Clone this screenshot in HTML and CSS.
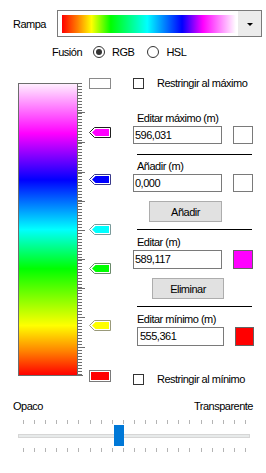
FILE: index.html
```html
<!DOCTYPE html>
<html lang="es">
<head>
    <meta charset="UTF-8">
    <title>Rampa de color</title>
    <link rel="stylesheet" href="styles.css">
</head>
<body>
    <div class="dialog">
        <div class="ramp-row">
            <span class="ramp-label">Rampa</span>
            <div class="combo">
                <div class="combo-value"><div class="ramp-h"></div></div>
                <div class="combo-btn"><span class="caret"></span></div>
            </div>
        </div>

        <div class="blend-row">
            <span class="blend-label">Fusión</span>
            <label class="radio"><span class="radio-dot checked"></span>RGB</label>
            <label class="radio"><span class="radio-dot"></span>HSL</label>
        </div>

        <div class="editor">
            <div class="scale">
                <div class="ramp-v"></div>
                <div class="ticks">
                    <svg width="7" height="293" viewBox="0 0 7 293">
                        <g stroke="#6d6d6d" stroke-width="1">
                            <path d="M0 29.5H7M0 59.5H7M0 89.5H7M0 118.5H7M0 147.5H7M0 176.5H7M0 205.5H7M0 234.5H7M0 264.5H7M0 292.5H5"/>
                        </g>
                    </svg>
                </div>
            </div>

            <!-- stops: top offset = position of the value on the scale -->
            <div class="markers">
                <svg class="marker" style="top: 1px" width="22" height="11" viewBox="0 0 22 11">
                    <rect x="0.5" y="0.5" width="21" height="10" fill="#fff" stroke="#8a8a8a"/>
                </svg>
                <svg class="marker" style="top: 50px" width="22" height="11" viewBox="0 0 22 11">
                    <polygon points="0.5,5.5 5.5,0.5 21.5,0.5 21.5,10.5 5.5,10.5" fill="#fff" stroke="#1e1e1e"/>
                    <polygon points="3,5.5 6.5,2 20,2 20,9 6.5,9" fill="#ff00ff"/>
                </svg>
                <svg class="marker" style="top: 97px" width="22" height="11" viewBox="0 0 22 11">
                    <polygon points="0.5,5.5 5.5,0.5 21.5,0.5 21.5,10.5 5.5,10.5" fill="#fff" stroke="#3a3a8a"/>
                    <polygon points="3,5.5 6.5,2 20,2 20,9 6.5,9" fill="#0000ff"/>
                </svg>
                <svg class="marker" style="top: 147px" width="22" height="11" viewBox="0 0 22 11">
                    <polygon points="0.5,5.5 5.5,0.5 21.5,0.5 21.5,10.5 5.5,10.5" fill="#fff" stroke="#7a9a9a"/>
                    <polygon points="3,5.5 6.5,2 20,2 20,9 6.5,9" fill="#00ffff"/>
                </svg>
                <svg class="marker" style="top: 186px" width="22" height="11" viewBox="0 0 22 11">
                    <polygon points="0.5,5.5 5.5,0.5 21.5,0.5 21.5,10.5 5.5,10.5" fill="#fff" stroke="#6a8a6a"/>
                    <polygon points="3,5.5 6.5,2 20,2 20,9 6.5,9" fill="#00ff00"/>
                </svg>
                <svg class="marker" style="top: 243px" width="22" height="11" viewBox="0 0 22 11">
                    <polygon points="0.5,5.5 5.5,0.5 21.5,0.5 21.5,10.5 5.5,10.5" fill="#fff" stroke="#9a9a7a"/>
                    <polygon points="3,5.5 6.5,2 20,2 20,9 6.5,9" fill="#ffff00"/>
                </svg>
                <svg class="marker" style="top: 293px" width="22" height="12" viewBox="0 0 22 12">
                    <rect x="0.5" y="0.5" width="21" height="11" fill="#fff" stroke="#7a7a7a"/>
                    <rect x="2" y="2" width="18" height="8" fill="#ff0000"/>
                </svg>
            </div>

            <div class="panel">
                <label class="check-row"><span class="checkbox"></span>Restringir al máximo</label>

                <div class="field-label label-max">Editar máximo (m)</div>
                <div class="field-row">
                    <div class="input">596,031</div>
                    <div class="swatch"></div>
                </div>
                <div class="separator"></div>

                <div class="field-label label-add">Añadir (m)</div>
                <div class="field-row">
                    <div class="input">0,000</div>
                    <div class="swatch"></div>
                </div>
                <button class="btn btn-add">Añadir</button>
                <div class="separator sep-add"></div>

                <div class="field-label label-edit">Editar (m)</div>
                <div class="field-row">
                    <div class="input input-tall">589,117</div>
                    <div class="swatch swatch-tall swatch-magenta"></div>
                </div>
                <button class="btn btn-delete">Eliminar</button>
                <div class="separator sep-add"></div>

                <div class="field-label label-edit">Editar mínimo (m)</div>
                <div class="field-row">
                    <div class="input input-tall input-min">555,361</div>
                    <div class="swatch swatch-tall swatch-red"></div>
                </div>

                <label class="check-row check-min"><span class="checkbox"></span>Restringir al mínimo</label>
            </div>
        </div>

        <div class="opacity">
            <div class="opacity-labels"><span>Opaco</span><span>Transparente</span></div>
            <div class="slider">
                <div class="slider-ticks">
                    <span></span><span></span><span></span><span></span><span></span><span></span><span></span>
                    <span></span><span></span><span></span><span></span><span></span><span></span><span></span>
                    <span></span><span></span><span></span><span></span><span></span><span></span><span></span>
                </div>
                <div class="slider-track"><div class="slider-thumb"></div></div>
                <div class="slider-ticks ticks-bottom">
                    <span></span><span></span><span></span><span></span><span></span><span></span><span></span>
                    <span></span><span></span><span></span><span></span><span></span><span></span><span></span>
                    <span></span><span></span><span></span><span></span><span></span><span></span><span></span>
                </div>
            </div>
        </div>
    </div>
</body>
</html>
```

FILE: styles.css
```css
:root {
    --border-color: #7a7a7a;
    --scale-color: #6d6d6d;
    --button-color: #e1e1e1;
    --button-border: #adadad;
    --accent-color: #0078d7;
    --text-color: #000000;
}
* { margin: 0; padding: 0; box-sizing: border-box; }
body { font-family: 'Liberation Sans', Arial, sans-serif; font-size: 11px; letter-spacing: -0.5px; color: var(--text-color); background: #ffffff; }
.dialog { width: 266px; height: 473px; overflow: hidden; }

/* ramp selector */
.ramp-row { display: flex; align-items: center; padding: 10px 0 0 13px; }
.ramp-label { width: 44px; }
.combo { display: flex; width: 205px; height: 27px; border: 1px solid var(--border-color); background: #ffffff; }
.combo-value { padding: 4px 2px 4px 4px; }
.ramp-h { width: 174px; height: 18px; background: linear-gradient(to right, #ff0000 0%, #ff8000 9%, #ffff00 17%, #00ff00 28%, #00ffff 49%, #0000ff 69%, #ff00ff 81%, #ffffff 100%); }
.combo-btn { flex: 1; display: flex; align-items: center; justify-content: center; background: #ececec; }
.caret { width: 0; height: 0; border-left: 3px solid transparent; border-right: 3px solid transparent; border-top: 3px solid #000000; margin-top: 1px; }

/* blend mode */
.blend-row { display: flex; align-items: center; height: 14px; margin-top: 8px; padding-left: 52px; }
.blend-label { margin-right: 11px; }
.radio { display: flex; align-items: center; gap: 7px; }
.radio + .radio { margin-left: 13px; }
.radio-dot { width: 12px; height: 12px; border: 1px solid #333333; border-radius: 50%; display: flex; align-items: center; justify-content: center; }
.radio-dot.checked::after { content: ''; width: 6px; height: 6px; border-radius: 50%; background: #333333; }

/* scale + stops + fields */
.editor { display: flex; margin-top: 18px; padding-left: 18px; }
.scale { display: flex; height: 293px; margin-top: 6px; }
.ramp-v { width: 60px; height: 293px; border: 1px solid var(--scale-color); background: linear-gradient(to bottom, #ffeeff 0%, #ff00ff 17%, #0000ff 33%, #00ffff 50%, #00ff00 63.5%, #ffff00 83%, #ff8000 92%, #ff0000 100%); }
.ticks { position: relative; width: 7px; height: 293px; background: repeating-linear-gradient(to bottom, var(--scale-color) 0 1px, transparent 1px 3px); background-size: 4px 100%; background-repeat: no-repeat; }
.ticks svg { display: block; }
.markers { position: relative; width: 22px; height: 306px; margin-left: 4px; }
.marker { position: absolute; left: 0; display: block; }

.panel { width: 121px; margin-left: 22px; }
.check-row { display: flex; align-items: center; gap: 13px; height: 12px; }
.checkbox { width: 11px; height: 11px; border: 1px solid #333333; background: #ffffff; }
.check-min { margin-top: 27px; }
.field-label { margin-left: 4px; line-height: 13px; }
.label-max { margin-top: 23px; }
.label-add { margin-top: 5px; }
.label-edit { margin-top: 6px; }
.field-row { display: flex; gap: 11px; margin-top: 1px; }
.input { width: 89px; height: 18px; border: 1px solid var(--border-color); padding-left: 1px; line-height: 16px; background: #ffffff; }
.input-tall { height: 19px; line-height: 17px; }
.input-min { width: 90px; margin-left: 4px; padding-left: 2px; }
.swatch { width: 20px; height: 18px; border: 1px solid var(--border-color); background: #ffffff; }
.swatch-tall { height: 19px; }
.swatch-magenta { background: #ff00ff; border-color: #646464; }
.swatch-red { background: #ff0000; border-color: #646464; }
.separator { width: 115px; margin: 10px 0 0 4px; border-top: 1px solid #000000; }
.sep-add { margin-top: 7px; }
.btn { display: block; height: 21px; font: inherit; letter-spacing: inherit; color: var(--text-color); background: var(--button-color); border: 1px solid var(--button-border); }
.btn-add { width: 73px; margin: 9px 0 0 16px; }
.btn-delete { width: 72px; margin: 9px 0 0 19px; }

/* opacity slider */
.opacity-labels { display: flex; justify-content: space-between; padding: 0 13px; margin-top: 15px; line-height: 13px; }
.slider { margin-top: 7px; }
.slider-ticks { display: flex; justify-content: space-between; width: 223px; height: 4px; margin-left: 23px; }
.slider-ticks span { width: 1px; height: 4px; background: #b4b4b4; }
.ticks-bottom { margin-top: 10px; }
.slider-track { position: relative; width: 232px; height: 4px; margin: 10px 0 0 18px; background: #e7eaea; border: 1px solid #d6d6d6; }
.slider-thumb { position: absolute; left: 95px; top: -10px; width: 10px; height: 21px; background: var(--accent-color); }
```
